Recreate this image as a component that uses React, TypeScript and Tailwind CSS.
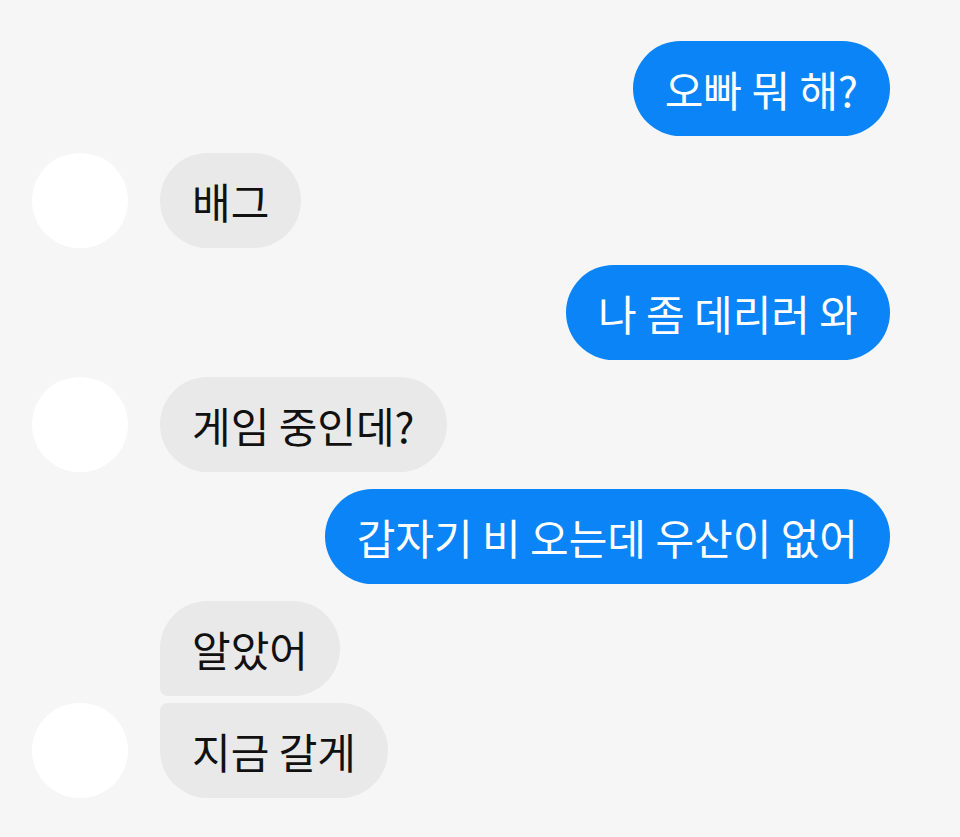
import React from "react";

type Msg = { from: "me" | "them"; text: string; avatar?: boolean; shape?: string };

const messages: Msg[] = [
  { from: "me", text: "오빠 뭐 해?" },
  { from: "them", text: "배그", avatar: true },
  { from: "me", text: "나 좀 데리러 와" },
  { from: "them", text: "게임 중인데?", avatar: true },
  { from: "me", text: "갑자기 비 오는데 우산이 없어" },
  { from: "them", text: "알았어", shape: "rounded-[48px] rounded-bl-[8px]" },
  { from: "them", text: "지금 갈게", avatar: true, shape: "rounded-[48px] rounded-tl-[8px]" },
];

function Bubble({ msg }: { msg: Msg }) {
  if (msg.from === "me") {
    return (
      <div className="flex justify-end">
        <div className="h-[95px] flex items-center px-[32px] rounded-full bg-[#0a84f7] text-white text-[42px] leading-none">
          {msg.text}
        </div>
      </div>
    );
  }
  return (
    <div className="flex items-center gap-[32px]">
      <div className={`w-[96px] h-[95px] rounded-full ${msg.avatar ? "bg-white" : "bg-transparent"}`} />
      <div
        className={`h-[95px] flex items-center px-[32px] bg-[#e9e9e9] text-[#111] text-[42px] leading-none ${
          msg.shape ?? "rounded-full"
        }`}
      >
        {msg.text}
      </div>
    </div>
  );
}

export default function App() {
  return (
    <div
      className="w-[960px] h-[837px] bg-[#f6f6f6] pl-[32px] pr-[70px] pt-[41px] flex flex-col"
      style={{ fontFamily: '"Noto Sans CJK KR", "Noto Sans", sans-serif' }}
    >
      {messages.map((m, i) => {
        const prev = messages[i - 1];
        const tight = prev && prev.from === m.from && m.from === "them";
        return (
          <div key={i} className={i === 0 ? "" : tight ? "mt-[7px]" : "mt-[17px]"}>
            <Bubble msg={m} />
          </div>
        );
      })}
    </div>
  );
}
